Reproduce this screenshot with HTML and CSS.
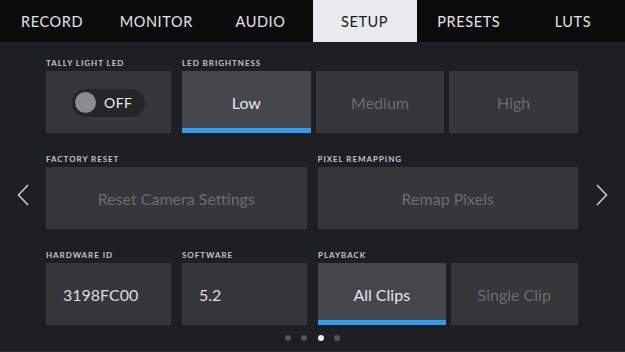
FILE: index.html
```html
<!DOCTYPE html>
<html lang="en">
<head>
  <meta charset="UTF-8">
  <meta name="viewport" content="width=device-width, initial-scale=1.0">
  <title>Setup</title>
  <link rel="stylesheet" href="styles.css">
</head>
<body>
  <!-- Menyfaner -->
  <nav class="tabs">
    <div class="tab">RECORD</div>
    <div class="tab">MONITOR</div>
    <div class="tab">AUDIO</div>
    <div class="tab active">SETUP</div>
    <div class="tab">PRESETS</div>
    <div class="tab">LUTS</div>
  </nav>

  <div class="page">
    <div class="arrow">
      <svg width="12" height="22" viewBox="0 0 12 22"><path d="M11 1 L1.5 11 L11 21" fill="none" stroke="#c9cacd" stroke-width="1.6"/></svg>
    </div>

    <div class="grid">
      <div class="row">
        <div class="group narrow">
          <div class="label">TALLY LIGHT LED</div>
          <div class="cell">
            <div class="toggle"><span class="knob"></span>OFF</div>
          </div>
        </div>
        <div class="group wide">
          <div class="label">LED BRIGHTNESS</div>
          <div class="buttons">
            <div class="cell btn selected">Low</div>
            <div class="cell btn">Medium</div>
            <div class="cell btn">High</div>
          </div>
        </div>
      </div>

      <div class="row">
        <div class="group wide">
          <div class="label">FACTORY RESET</div>
          <div class="cell btn">Reset Camera Settings</div>
        </div>
        <div class="group wide">
          <div class="label">PIXEL REMAPPING</div>
          <div class="cell btn">Remap Pixels</div>
        </div>
      </div>

      <div class="row">
        <div class="group narrow">
          <div class="label">HARDWARE ID</div>
          <div class="cell value">3198FC00</div>
        </div>
        <div class="group narrow">
          <div class="label">SOFTWARE</div>
          <div class="cell value">5.2</div>
        </div>
        <div class="group wide">
          <div class="label">PLAYBACK</div>
          <div class="buttons">
            <div class="cell btn selected">All Clips</div>
            <div class="cell btn">Single Clip</div>
          </div>
        </div>
      </div>
    </div>

    <div class="arrow">
      <svg width="12" height="22" viewBox="0 0 12 22"><path d="M1 1 L10.5 11 L1 21" fill="none" stroke="#c9cacd" stroke-width="1.6"/></svg>
    </div>
  </div>

  <!-- Sideindikator -->
  <div class="dots">
    <span class="dot"></span>
    <span class="dot"></span>
    <span class="dot on"></span>
    <span class="dot"></span>
  </div>
</body>
</html>
```

FILE: styles.css
```css
/* Generelle stiler */
* { box-sizing: border-box; }
body {
  margin: 0;
  width: 625px;
  height: 352px;
  overflow: hidden;
  font-family: 'Lato', 'Open Sans', sans-serif;
  background-color: #1e1f23;
  color: #e6e6e6;
  border-bottom: 1px solid #2c2d31;
}
/* Faner */
.tabs {
  display: flex;
  height: 42px;
  background-color: #0b0b0c;
}
.tab {
  flex: 1;
  display: flex;
  align-items: center;
  justify-content: center;
  font-size: 14.5px;
  letter-spacing: 0.6px;
  color: #e4e4e4;
}
.tab.active {
  background-color: #e8eaec;
  color: #1b1b1d;
}
/* Innhold */
.page {
  display: flex;
  padding-top: 16px;
}
.arrow {
  width: 46px;
  display: flex;
  align-items: center;
  justify-content: center;
  padding-top: 7px;
}
.arrow:last-child { width: 47px; }
.grid {
  flex: 1;
  display: flex;
  flex-direction: column;
  gap: 21px;
}
.row {
  display: flex;
  gap: 11px;
}
.group.narrow { width: 125px; }
.group.wide { flex: 1; }
.label {
  height: 10px;
  line-height: 10px;
  margin-bottom: 3px;
  font-size: 8px;
  font-weight: 700;
  letter-spacing: 0.95px;
  color: #c4c5c8;
}
.buttons {
  display: flex;
  gap: 5px;
}
.buttons .btn { flex: 1; }
.cell {
  height: 62px;
  background-color: #36373b;
  display: flex;
  align-items: center;
  font-size: 16px;
}
.btn {
  justify-content: center;
  color: #6b6c70;
}
.btn.selected {
  background-color: #46474c;
  color: #e6e6e6;
  border-bottom: 5px solid #2e9cf1;
  padding-top: 5px;
}
.value {
  padding-left: 17px;
  color: #dcdcdc;
}
/* Bryter */
.cell:has(.toggle) { justify-content: center; }
.toggle {
  width: 73px;
  height: 28px;
  border-radius: 14px;
  background-color: #242529;
  display: flex;
  align-items: center;
  gap: 8px;
  padding-left: 3px;
  font-size: 14px;
  letter-spacing: 0.5px;
  color: #ececec;
  margin-top: 1px;
}
.knob {
  width: 21px;
  height: 21px;
  border-radius: 50%;
  background-color: #8b8c90;
}
/* Prikker */
.dots {
  display: flex;
  justify-content: center;
  gap: 10.5px;
  margin-top: 10px;
}
.dot {
  width: 6px;
  height: 6px;
  border-radius: 50%;
  background-color: #55565a;
}
.dot.on { background-color: #f2f2f2; }
```
